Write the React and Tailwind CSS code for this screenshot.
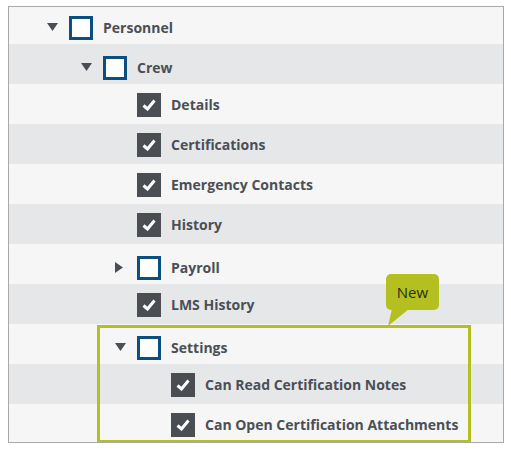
import React from 'react';

const rows = [
  { label: 'Personnel', level: 0, type: 'open', checked: false },
  { label: 'Crew', level: 1, type: 'open', checked: false },
  { label: 'Details', level: 2, type: 'leaf', checked: true },
  { label: 'Certifications', level: 2, type: 'leaf', checked: true },
  { label: 'Emergency Contacts', level: 2, type: 'leaf', checked: true },
  { label: 'History', level: 2, type: 'leaf', checked: true },
  { label: 'Payroll', level: 2, type: 'closed', checked: false },
  { label: 'LMS History', level: 2, type: 'leaf', checked: true },
  { label: 'Settings', level: 2, type: 'open', checked: false },
  { label: 'Can Read Certification Notes', level: 3, type: 'leaf', checked: true },
  { label: 'Can Open Certification Attachments', level: 3, type: 'leaf', checked: true },
];

const indents = ['pl-[38px]', 'pl-[72px]', 'pl-[106px]', 'pl-[140px]'];

const Arrow = ({ type }) => {
  if (type === 'open') {
    return (
      <svg width="11" height="8" viewBox="0 0 11 8" className="mb-[3px]">
        <path d="M0 0 L11 0 L5.5 8 Z" fill="#4a4f55" />
      </svg>
    );
  }
  if (type === 'closed') {
    return (
      <svg width="8" height="11" viewBox="0 0 8 11" className="mb-[2px]">
        <path d="M0 0 L8 5.5 L0 11 Z" fill="#4a4f55" />
      </svg>
    );
  }
  return null;
};

const Box = ({ checked }) =>
  checked ? (
    <div className="w-6 h-6 bg-[#4a4e53] flex items-center justify-center shrink-0">
      <svg width="14" height="12" viewBox="0 0 14 12">
        <path d="M1.5 6.5 L5.5 10 L12.5 1.5" fill="none" stroke="#fff" strokeWidth="3" />
      </svg>
    </div>
  ) : (
    <div className="w-6 h-6 border-[3px] border-[#0b4f80] bg-white shrink-0" />
  );

export default function App() {
  return (
    <div className="w-[511px] h-[450px] bg-white pt-[6px] pl-[8px] font-['Open_Sans',sans-serif]">
      <div className="relative w-[496px] h-[437px] border border-[#a8a8a8] overflow-hidden">
        <div className="-mt-[3px]">
          {rows.map((r, i) => (
            <div
              key={i}
              className={`h-10 flex items-start ${indents[r.level]} ${r.type === 'leaf' ? 'pt-[9px]' : 'pt-[12px]'} ${i % 2 === 0 ? 'bg-[#f6f6f6]' : 'bg-[#e6e7e8]'}`}
            >
              <div className="w-[22px] h-6 flex items-center shrink-0">
                <Arrow type={r.type} />
              </div>
              <Box checked={r.checked} />
              <span className="ml-[10px] leading-6 text-[14px] font-bold text-[#4a4f57] whitespace-nowrap">
                {r.label}
              </span>
            </div>
          ))}
        </div>

        {/* "New" annotation */}
        <div className="absolute left-[88px] top-[318px] w-[374px] h-[118px] border-[3px] border-[#b3c020]" />
        <div className="absolute left-[377px] top-[267px] w-[53px] h-[36px] rounded-[5px] bg-[#b3c020] flex items-center justify-center text-[15px] text-[#2a2d14]">
          New
        </div>
        <svg className="absolute left-[377px] top-[302px]" width="24" height="18" viewBox="0 0 24 18">
          <path d="M6 0 L23 0 L2 17 Z" fill="#b3c020" />
        </svg>
      </div>
    </div>
  );
}
